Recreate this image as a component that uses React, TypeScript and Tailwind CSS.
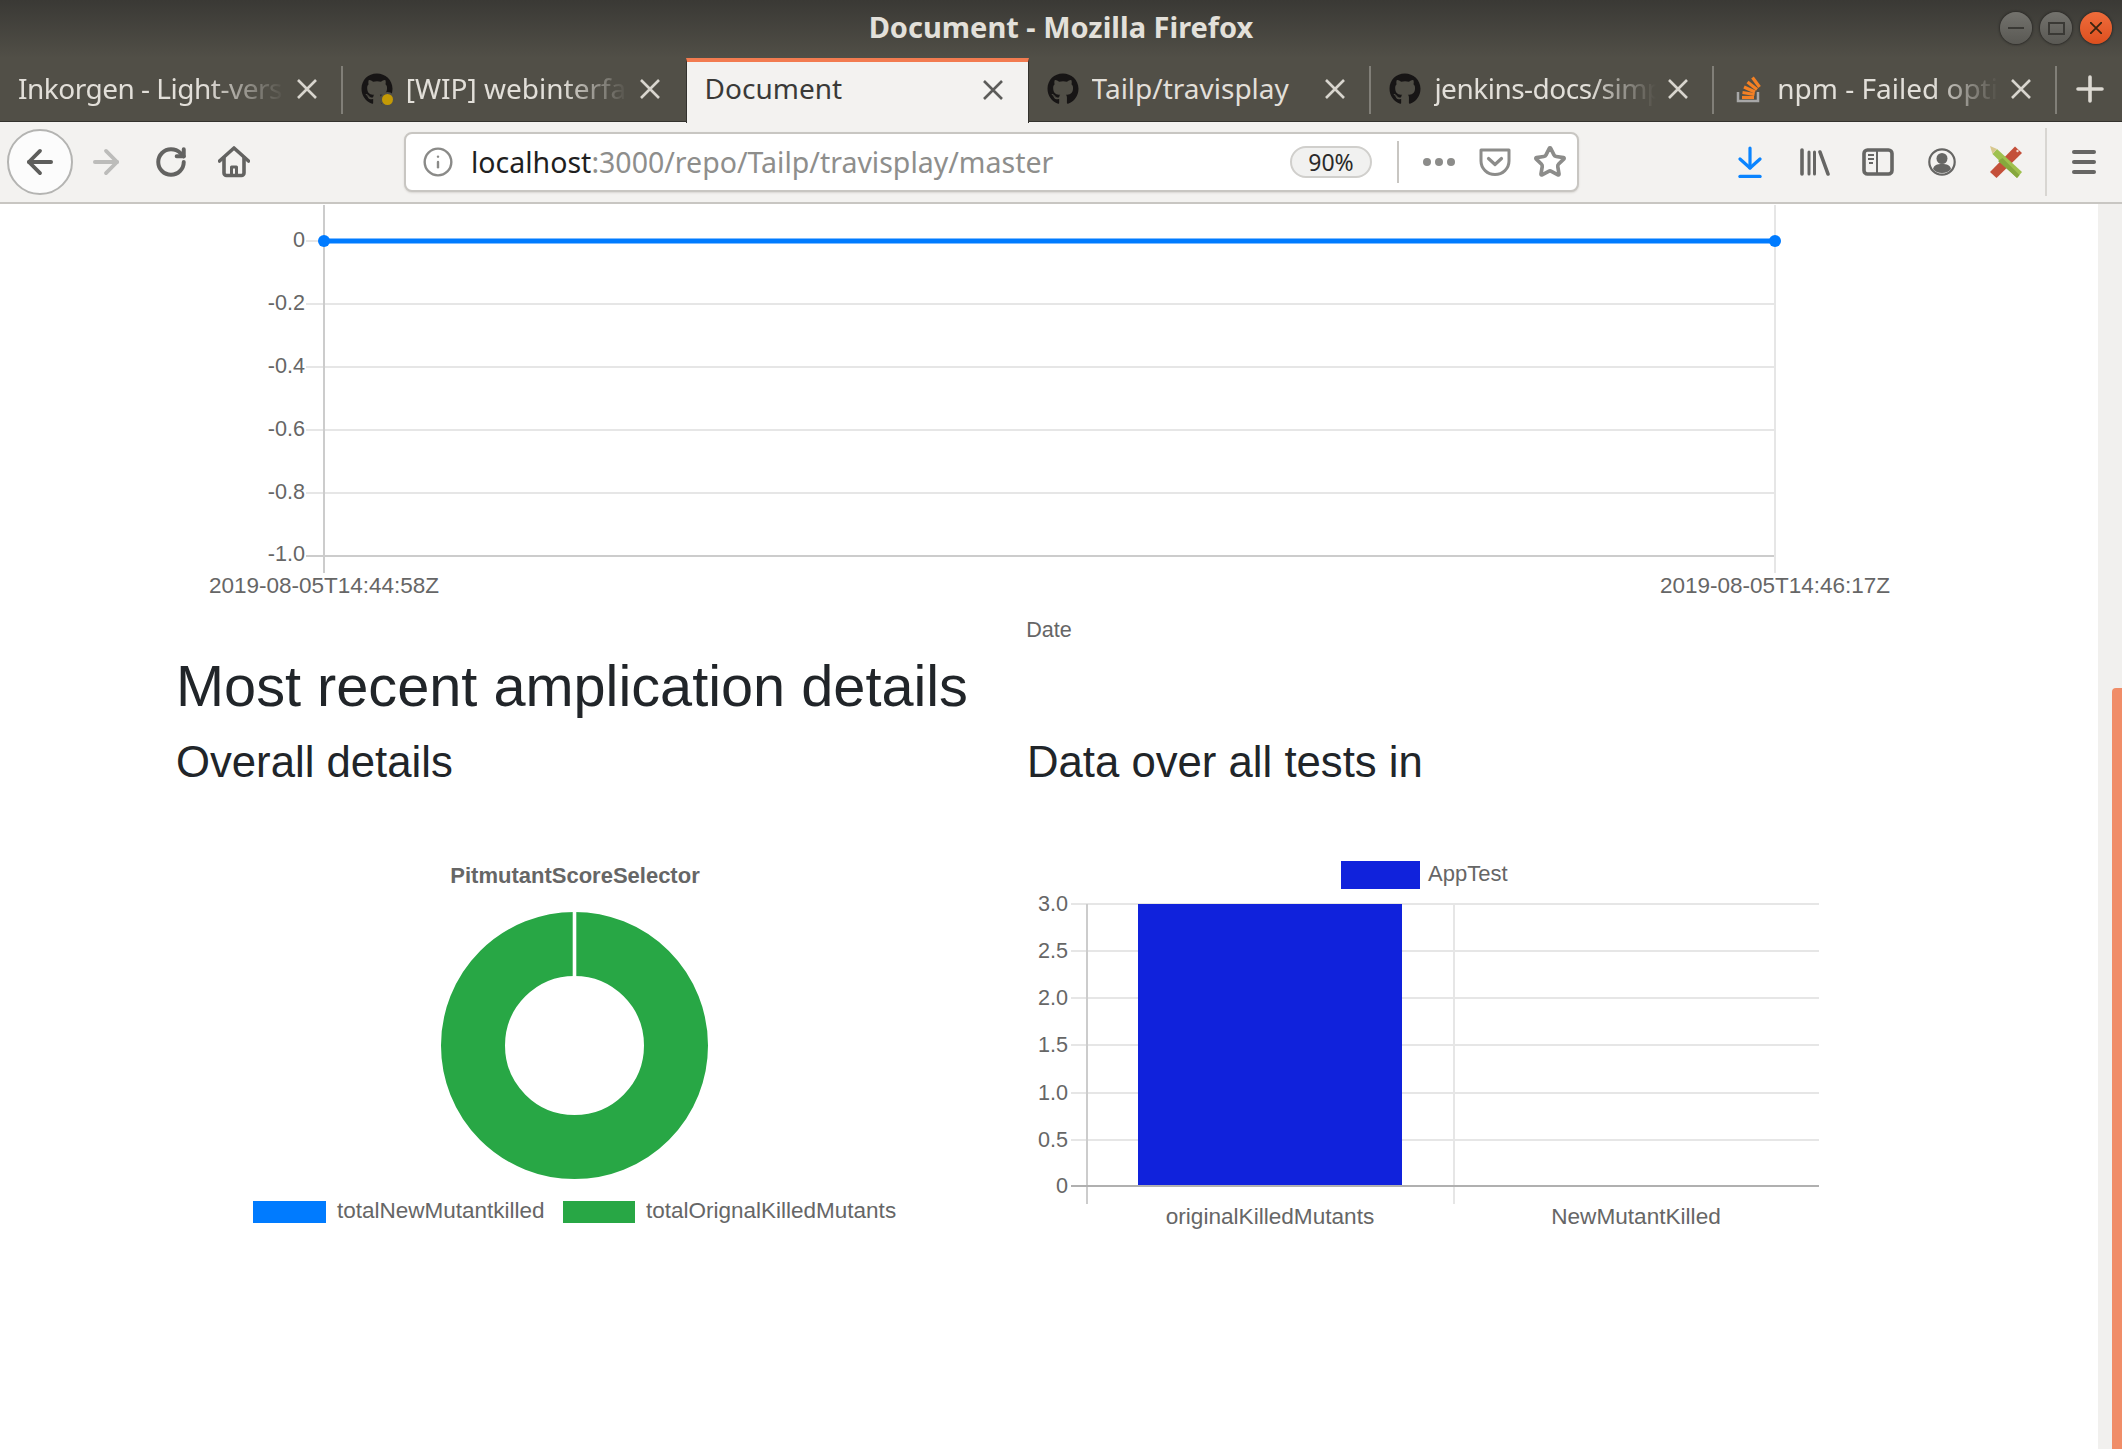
import { FaGithub } from "react-icons/fa"
import { ArrowLeft, ArrowRight, Info, RotateCw, Star } from "lucide-react"

type TabInfo = {
  title: string
  icon?: "github" | "github-dot" | "stack"
  active?: boolean
  sep?: boolean
  // extra text classes: tighter tracking and/or the overflow fade
  textClass?: string
}

const fade = "[mask-image:linear-gradient(to_right,black_70%,transparent)]"

const tabs: TabInfo[] = [
  { title: "Inkorgen - Light-vers", sep: true, textClass: `tracking-[-0.5px] ${fade}` },
  { title: "[WIP] webinterfa", icon: "github-dot", textClass: fade },
  { title: "Document", active: true },
  { title: "Tailp/travisplay", icon: "github", sep: true },
  { title: "jenkins-docs/simp", icon: "github", sep: true, textClass: `tracking-[-0.5px] ${fade}` },
  { title: "npm - Failed opti", icon: "stack", sep: true, textClass: fade },
]

function StackIcon() {
  return (
    <svg viewBox="0 0 32 32" className="h-8 w-8">
      <path d="M6 19v9h20v-9" fill="none" stroke="#a8a8a8" strokeWidth="2.5" />
      <g stroke="#f48024" strokeWidth="3.2">
        <path d="M10 24.5h12" />
        <path d="M10.5 19.5l12 2" />
        <path d="M12 14l11 5" />
        <path d="M15.5 9l9.5 7.5" />
        <path d="M20.5 4.5l7 9.5" />
      </g>
    </svg>
  )
}

function TabIcon({ kind }: { kind: TabInfo["icon"] }) {
  if (kind === "stack") return <StackIcon />
  return (
    <span className="relative block h-8 w-8">
      <FaGithub className="h-8 w-8 text-[#171515]" />
      {kind === "github-dot" && (
        <span className="absolute right-0 bottom-0 h-[11px] w-[11px] rounded-full bg-[#c49a06] ring-2 ring-[#514f47]" />
      )}
    </span>
  )
}

function CloseX({ active }: { active?: boolean }) {
  return (
    <svg viewBox="0 0 20 20" className="h-5 w-5 shrink-0" stroke={active ? "#5c5c5a" : "#d8d5ce"} strokeWidth="2.6">
      <path d="M1 1l18 18M19 1L1 19" />
    </svg>
  )
}

function Tab({ tab }: { tab: TabInfo }) {
  if (tab.active) {
    return (
      <div className="flex h-[65px] w-[343px] shrink-0 items-center border-x border-[#33322e] border-t-4 border-t-[#f27b50] bg-[#f3f2f0] pb-[6px] pl-[18px] pr-[25px]">
        <span className="flex-1 pb-[3px] text-[28px] text-[#3a3a38]">{tab.title}</span>
        <CloseX active />
      </div>
    )
  }
  return (
    <div className="flex h-[64px] w-[342.8px] shrink-0 items-center">
      <div className="flex h-full min-w-0 flex-1 items-center pb-[2px] pl-[18px] pr-[24px]">
        {tab.icon && (
          <span className="mr-[13px] shrink-0">
            <TabIcon kind={tab.icon} />
          </span>
        )}
        <span className={`mr-[12px] min-w-0 flex-1 overflow-hidden whitespace-nowrap pb-[2px] text-[28px] text-[#e2dfd9] ${tab.textClass ?? ""}`}>
          {tab.title}
        </span>
        <CloseX />
      </div>
      <span className={tab.sep ? "h-12 w-[2px] bg-[#817f78]" : "h-12 w-[2px]"} />
    </div>
  )
}

function WindowButton({ className, children }: { className: string; children: React.ReactNode }) {
  return (
    <span className={`flex h-8 w-8 items-center justify-center rounded-full shadow-[0_0_2px_1px_#2e2d2a] ${className}`}>
      {children}
    </span>
  )
}

function HomeIcon() {
  return (
    <svg viewBox="0 0 32 32" className="ml-[30px] h-8 w-8" fill="none" stroke="#636361" strokeWidth="3.6" strokeLinecap="round" strokeLinejoin="round">
      <path d="M1.5 15L16 2l14.5 13" />
      <path d="M6 12v15a2.5 2.5 0 0 0 2.5 2.5h15A2.5 2.5 0 0 0 26 27V12" />
      <path d="M13.5 29v-8h5v8" strokeWidth="3" />
    </svg>
  )
}

function PocketIcon() {
  return (
    <svg viewBox="0 0 32 28" className="ml-[24px] h-7 w-8" fill="none" stroke="#8c8c8a" strokeWidth="3" strokeLinecap="round" strokeLinejoin="round">
      <path d="M2 2h28v11a14 13.5 0 0 1-28 0z" />
      <path d="M9.5 10.5L16 16.5l6.5-6" strokeWidth="3.2" />
    </svg>
  )
}

function LibraryIcon() {
  return (
    <svg viewBox="0 0 30 28" className="ml-[38px] h-7 w-[30px]" stroke="#666664" strokeWidth="3.6" strokeLinecap="round">
      <path d="M2 2v24" />
      <path d="M9 4v22" strokeWidth="3" />
      <path d="M14.5 4v22" strokeWidth="3" />
      <path d="M20 4l8 22" />
    </svg>
  )
}

function SidebarIcon() {
  return (
    <svg viewBox="0 0 32 28" className="ml-[32px] h-7 w-8" fill="none" stroke="#666664">
      <rect x="2" y="2" width="28" height="24" rx="3.5" strokeWidth="3.6" />
      <path d="M15 2v24" strokeWidth="2" />
      <path d="M6 7h6M6 11h6M7 15h4" strokeWidth="2" />
    </svg>
  )
}

function AccountIcon() {
  return (
    <svg viewBox="0 0 28 28" className="ml-[34px] h-7 w-7">
      <circle cx="14" cy="14" r="12.7" fill="none" stroke="#666664" strokeWidth="2.2" />
      <circle cx="14" cy="10.5" r="5.5" fill="#666664" />
      <path d="M5 21c1-4 4-5 9-5s8 1 9 5c-2 2.5-5 4-9 4s-7-1.5-9-4z" fill="#666664" />
    </svg>
  )
}

function ToolsIcon() {
  return (
    <svg viewBox="0 0 32 32" className="ml-[34px] h-8 w-8">
      <path d="M0 26L25 0.5l7 6.5L6.500 32z" fill="#c4503a" />
      <circle cx="27.500" cy="5" r="1.2" fill="#f3d9d0" />
      <path d="M7 3l25 23-5 6L2.500 8z" fill="#9fc14e" />
      <path d="M12.500 12L29.500 29l-2.500 3L8 15z" fill="#86a83d" />
      <path d="M0 0l7 3-4.500 5z" fill="#d8c88e" />
    </svg>
  )
}

function BrowserChrome() {
  return (
    <header className="shrink-0 font-['Noto_Sans',sans-serif]">
      <div className="relative flex h-[58px] items-center justify-center bg-gradient-to-b from-[#3a3935] to-[#514f47] pb-[4px]">
        <span className="text-[29px] font-bold text-[#e3e0da]">Document - Mozilla Firefox</span>
        <div className="absolute top-3 right-[10px] flex gap-2">
          <WindowButton className="bg-gradient-to-b from-[#73726d] to-[#5a5954]">
            <span className="h-[2px] w-4 bg-[#3a3935]" />
          </WindowButton>
          <WindowButton className="bg-gradient-to-b from-[#73726d] to-[#5a5954]">
            <span className="h-[13px] w-[17px] border-2 border-[#3a3935]" />
          </WindowButton>
          <WindowButton className="bg-gradient-to-b from-[#ef6c3b] to-[#dd4f1e]">
            <svg viewBox="0 0 12 12" className="h-3 w-3" stroke="#3a2410" strokeWidth="1.8">
              <path d="M0 0l12 12M12 0L0 12" />
            </svg>
          </WindowButton>
        </div>
      </div>

      <div className="flex h-[64px] items-start border-b border-[#33322e] bg-[#514f47]">
        {tabs.map((tab) => (
          <Tab key={tab.title} tab={tab} />
        ))}
        <svg viewBox="0 0 28 28" className="ml-[19px] mt-[17px] h-7 w-7" stroke="#dcd9d2" strokeWidth="3.6" strokeLinecap="round">
          <path d="M14 2v24M2 14h24" />
        </svg>
      </div>

      <div className="flex h-[82px] items-center border-b-2 border-[#c8c6c2] bg-[#f3f2f0]">
        <span className="ml-[7px] flex h-[66px] w-[66px] items-center justify-center rounded-full border-2 border-[#b4b4b2] bg-[#fcfcfc]">
          <ArrowLeft size={38} strokeWidth={2.4} className="text-[#5e5e5c]" />
        </span>
        <ArrowRight size={38} strokeWidth={2.4} className="ml-[14px] text-[#bcbcba]" />
        <RotateCw size={34} strokeWidth={2.8} className="ml-[29px] text-[#636361]" />
        <HomeIcon />

        <div className="ml-[154px] flex h-[60px] w-[1175px] items-center rounded-lg border-2 border-[#c8c6c2] bg-white shadow-[0_1px_2px_#d8d6d2]">
          <Info size={32} strokeWidth={1.8} className="ml-[16px] text-[#8a8a88]" />
          <span className="ml-[17px] whitespace-nowrap text-[28.5px] text-[#1f1f1f]">
            localhost<span className="text-[#8e8e8c]">:3000/repo/Tailp/travisplay/master</span>
          </span>
          <span className="ml-auto flex h-8 w-[82px] items-center justify-center rounded-full border-2 border-[#d0cfcc] bg-[#f1f1f0] text-[23px] text-[#2a2a2a]">
            90%
          </span>
          <span className="ml-[25px] h-[42px] w-[2px] bg-[#c8c6c2]" />
          <span className="ml-[24px] flex w-8 justify-between">
            <span className="h-2 w-2 rounded-full bg-[#8c8c8a]" />
            <span className="h-2 w-2 rounded-full bg-[#8c8c8a]" />
            <span className="h-2 w-2 rounded-full bg-[#8c8c8a]" />
          </span>
          <PocketIcon />
          <Star size={34} strokeWidth={2.6} className="ml-[22px] mr-[10px] text-[#8c8c8a]" />
        </div>

        <svg viewBox="0 0 24 32" className="ml-[159px] h-8 w-6" fill="none" stroke="#0a84ff" strokeWidth="3.2" strokeLinecap="round" strokeLinejoin="round">
          <path d="M12 2v20" />
          <path d="M2 13l10 9 10-9" />
          <path d="M2 30.4h20" strokeWidth="3.4" />
        </svg>
        <LibraryIcon />
        <SidebarIcon />
        <AccountIcon />
        <ToolsIcon />
        <span className="ml-[23px] h-[68px] w-[2px] bg-[#d8d6d2]" />
        <span className="ml-[25px] flex h-6 w-6 flex-col justify-between">
          <span className="h-1 rounded-full bg-[#666664]" />
          <span className="h-1 rounded-full bg-[#666664]" />
          <span className="h-1 rounded-full bg-[#666664]" />
        </span>
      </div>
    </header>
  )
}

const lineTicks = [
  { label: "0", y: 241, textY: 239 },
  { label: "-0.2", y: 304, textY: 302 },
  { label: "-0.4", y: 367, textY: 365 },
  { label: "-0.6", y: 430, textY: 428 },
  { label: "-0.8", y: 493, textY: 491 },
  { label: "-1.0", y: 556, textY: 553 },
]

function LineChart() {
  return (
    <svg viewBox="176 205 1745 447" className="block h-[447px] w-[1745px] shrink-0 text-[22.5px]">
      {lineTicks.map((t) => (
        <g key={t.label}>
          <path d={`M306 ${t.y}H1775`} stroke={t.label === "-1.0" ? "#cccccc" : "#e6e6e6"} strokeWidth="2" />
          <text x="305" y={t.textY} textAnchor="end" dominantBaseline="central" fill="#666666" className="text-[21.6px]">
            {t.label}
          </text>
        </g>
      ))}
      <path d="M324 205V573" stroke="#cccccc" strokeWidth="2" />
      <path d="M1775 205V573" stroke="#e6e6e6" strokeWidth="2" />
      <path d="M324 241H1775" stroke="#007bff" strokeWidth="5" />
      <circle cx="324" cy="241" r="6" fill="#007bff" />
      <circle cx="1775" cy="241" r="6" fill="#007bff" />
      <text x="324" y="585" textAnchor="middle" dominantBaseline="central" fill="#666666">
        2019-08-05T14:44:58Z
      </text>
      <text x="1775" y="585" textAnchor="middle" dominantBaseline="central" fill="#666666">
        2019-08-05T14:46:17Z
      </text>
      <text x="1049" y="629" textAnchor="middle" dominantBaseline="central" fill="#666666" className="text-[21.6px]">
        Date
      </text>
    </svg>
  )
}

function DoughnutChart() {
  return (
    <svg viewBox="176 788 851 460" className="block h-[460px] w-[851px] text-[22.5px]">
      <text x="575" y="875" textAnchor="middle" dominantBaseline="central" fontWeight="700" fill="#666666" className="text-[22px]">
        PitmutantScoreSelector
      </text>
      <circle cx="574.5" cy="1045.5" r="101.5" fill="none" stroke="#28a745" strokeWidth="64" />
      <path d="M574.5 910V978" stroke="#ffffff" strokeWidth="3.6" />
      <rect x="253" y="1201" width="73" height="22" fill="#007bff" />
      <text x="337" y="1210" dominantBaseline="central" fill="#666666">
        totalNewMutantkilled
      </text>
      <rect x="563" y="1201" width="72" height="22" fill="#28a745" />
      <text x="646" y="1210" dominantBaseline="central" fill="#666666">
        totalOrignalKilledMutants
      </text>
    </svg>
  )
}

const barTicks = [
  { label: "3.0", y: 904 },
  { label: "2.5", y: 951 },
  { label: "2.0", y: 998 },
  { label: "1.5", y: 1045 },
  { label: "1.0", y: 1093 },
  { label: "0.5", y: 1140 },
]

function BarChart() {
  return (
    <svg viewBox="1027 788 851 460" className="block h-[460px] w-[851px] text-[21.6px]">
      <rect x="1341" y="861" width="79" height="28" fill="#1022dc" />
      <text x="1428" y="873" dominantBaseline="central" fill="#666666" className="text-[22px]">
        AppTest
      </text>
      {barTicks.map((t) => (
        <g key={t.label}>
          <path d={`M1071 ${t.y}H1819`} stroke="#e6e6e6" strokeWidth="2" />
          <text x="1068" y={t.y - 1} textAnchor="end" dominantBaseline="central" fill="#666666">
            {t.label}
          </text>
        </g>
      ))}
      <path d="M1087 904V1204" stroke="#cccccc" strokeWidth="2" />
      <path d="M1454 904V1204" stroke="#e6e6e6" strokeWidth="2" />
      <rect x="1138" y="904" width="264" height="282" fill="#1022dc" />
      <path d="M1071 1186H1819" stroke="#b0b0b0" strokeWidth="2" />
      <text x="1068" y="1185" textAnchor="end" dominantBaseline="central" fill="#666666">
        0
      </text>
      <text x="1270" y="1216" textAnchor="middle" dominantBaseline="central" fill="#666666" className="text-[22.6px]">
        originalKilledMutants
      </text>
      <text x="1636" y="1216" textAnchor="middle" dominantBaseline="central" fill="#666666" className="text-[22.6px]">
        NewMutantKilled
      </text>
    </svg>
  )
}

export default function App() {
  return (
    <div className="flex h-screen w-full flex-col overflow-hidden bg-white">
      <BrowserChrome />
      <div className="flex min-h-0 flex-1">
        <main className="min-w-0 flex-1 bg-white pl-[176px] pt-px font-['Liberation_Sans',Arial,sans-serif] text-[#212529]">
          <LineChart />
          <h1 className="text-[57.7px] leading-[69px] font-normal">Most recent amplication details</h1>
          <div className="mt-[15px] grid grid-cols-[851px_851px]">
            <section>
              <h4 className="text-[43.7px] leading-[52px] font-normal">Overall details</h4>
              <DoughnutChart />
            </section>
            <section>
              <h4 className="text-[43.7px] leading-[52px] font-normal">Data over all tests in</h4>
              <BarChart />
            </section>
          </div>
        </main>
        {/* Scrollbar track and thumb */}
        <div className="flex w-6 shrink-0 flex-col items-end bg-[#f1f0ee] pt-[484px]">
          <div className="w-[10px] flex-1 rounded-tl-sm bg-[#f08d68]" />
        </div>
      </div>
    </div>
  )
}
